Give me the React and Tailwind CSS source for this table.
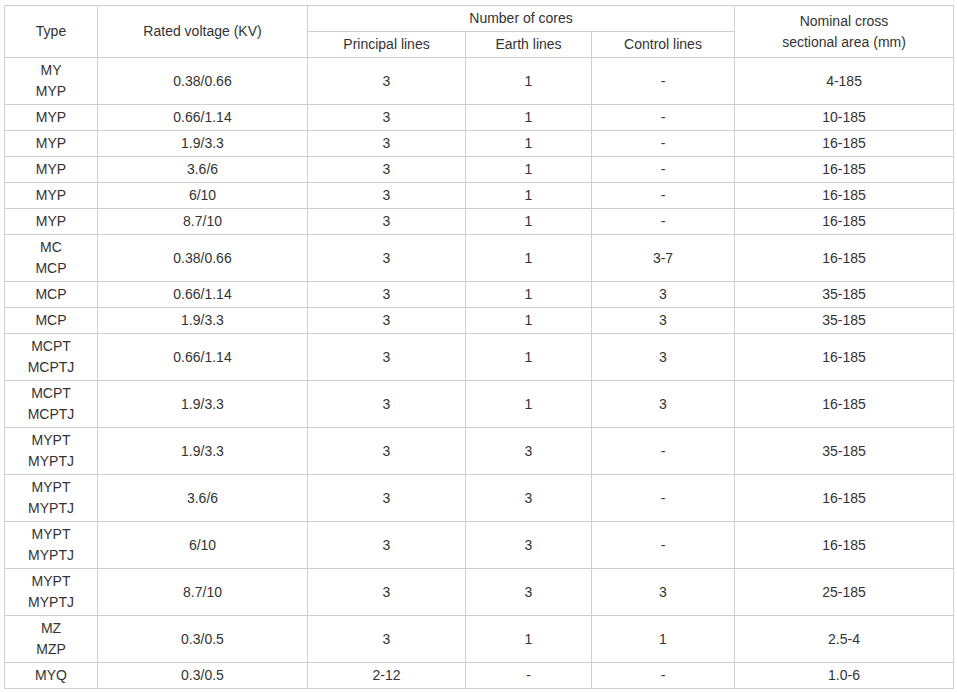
import React from 'react';

const rows = [
  [['MY', 'MYP'], '0.38/0.66', '3', '1', '-', '4-185'],
  [['MYP'], '0.66/1.14', '3', '1', '-', '10-185'],
  [['MYP'], '1.9/3.3', '3', '1', '-', '16-185'],
  [['MYP'], '3.6/6', '3', '1', '-', '16-185'],
  [['MYP'], '6/10', '3', '1', '-', '16-185'],
  [['MYP'], '8.7/10', '3', '1', '-', '16-185'],
  [['MC', 'MCP'], '0.38/0.66', '3', '1', '3-7', '16-185'],
  [['MCP'], '0.66/1.14', '3', '1', '3', '35-185'],
  [['MCP'], '1.9/3.3', '3', '1', '3', '35-185'],
  [['MCPT', 'MCPTJ'], '0.66/1.14', '3', '1', '3', '16-185'],
  [['MCPT', 'MCPTJ'], '1.9/3.3', '3', '1', '3', '16-185'],
  [['MYPT', 'MYPTJ'], '1.9/3.3', '3', '3', '-', '35-185'],
  [['MYPT', 'MYPTJ'], '3.6/6', '3', '3', '-', '16-185'],
  [['MYPT', 'MYPTJ'], '6/10', '3', '3', '-', '16-185'],
  [['MYPT', 'MYPTJ'], '8.7/10', '3', '3', '3', '25-185'],
  [['MZ', 'MZP'], '0.3/0.5', '3', '1', '1', '2.5-4'],
  [['MYQ'], '0.3/0.5', '2-12', '-', '-', '1.0-6'],
];

const cell = 'border border-[#cfcfcf] px-[4px] py-[2px] text-center align-middle font-normal';

export default function App() {
  return (
    <div className="bg-white pl-[4px] pt-[5px] text-[14px] leading-[21px] text-[#333333]" style={{ fontFamily: '"Liberation Sans", Arial, sans-serif' }}>
      <table className="w-[949px] table-fixed border-collapse">
        <colgroup>
          <col className="w-[93px]" />
          <col className="w-[210px]" />
          <col className="w-[158px]" />
          <col className="w-[126px]" />
          <col className="w-[143px]" />
          <col className="w-[219px]" />
        </colgroup>
        <thead>
          <tr>
            <th rowSpan={2} className={cell}>Type</th>
            <th rowSpan={2} className={cell}>Rated voltage (KV)</th>
            <th colSpan={3} className={cell}>Number of cores</th>
            <th rowSpan={2} className={cell}>Nominal cross<br />sectional area (mm)</th>
          </tr>
          <tr>
            <th className={cell}>Principal lines</th>
            <th className={cell}>Earth lines</th>
            <th className={cell}>Control lines</th>
          </tr>
        </thead>
        <tbody>
          {rows.map((r, i) => (
            <tr key={i}>
              <td className={cell}>
                {r[0].map((t, j) => (
                  <div key={j}>{t}</div>
                ))}
              </td>
              {r.slice(1).map((v, j) => (
                <td key={j} className={cell}>{v}</td>
              ))}
            </tr>
          ))}
        </tbody>
      </table>
    </div>
  );
}
